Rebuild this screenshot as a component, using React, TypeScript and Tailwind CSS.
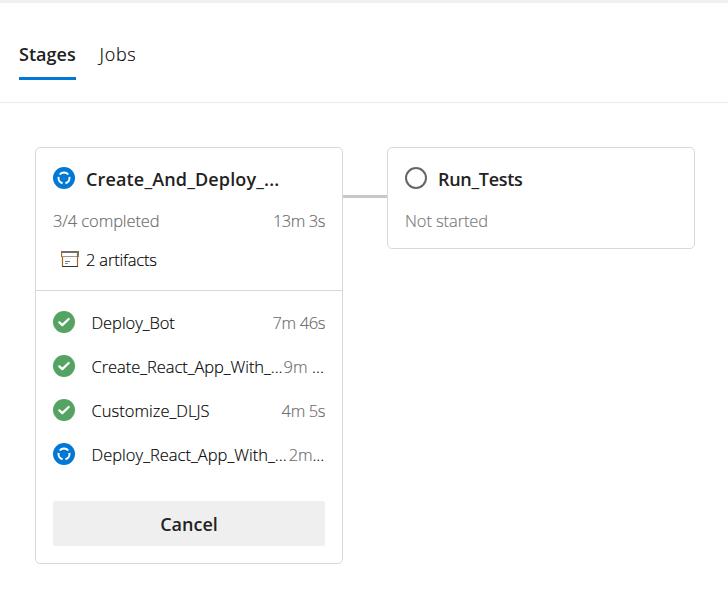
import type { ReactNode } from "react";

function RunningIcon() {
  return (
    <svg width="22" height="22" viewBox="0 0 22 22" className="block shrink-0">
      <circle cx="11" cy="11" r="11" fill="#0078d4" />
      <g fill="none" stroke="#fff" strokeWidth="2">
        <path d="M6.7 7.5A5.5 5.5 0 0 1 15.3 7.5" />
        <path d="M16.4 9.9A5.5 5.5 0 0 1 12.4 16.3" />
        <path d="M9.6 16.3A5.5 5.5 0 0 1 5.6 9.9" />
      </g>
    </svg>
  );
}

function SuccessIcon() {
  return (
    <svg width="22" height="22" viewBox="0 0 22 22" className="block shrink-0">
      <circle cx="11" cy="11" r="11" fill="#55a362" />
      <path d="M6.4 11.4 9.3 14.1 15.7 8" fill="none" stroke="#fff" strokeWidth="2.3" strokeLinecap="round" strokeLinejoin="round" />
    </svg>
  );
}

function PendingIcon() {
  return (
    <svg width="22" height="22" viewBox="0 0 22 22" className="block shrink-0">
      <circle cx="11" cy="11" r="10" fill="none" stroke="#666" strokeWidth="2" />
    </svg>
  );
}

function ArtifactIcon() {
  return (
    <svg width="18" height="16" viewBox="0 0 18 16" className="-mt-[3px] block shrink-0">
      <path d="M0 1H18" stroke="#111" strokeWidth="1.2" />
      <path d="M1 5.5H17" stroke="#999" />
      <path d="M.5 1V6M1.5 6V15M16.5 1V15" stroke="#a8661a" strokeWidth="1.2" />
      <path d="M17.5 2V6" stroke="#667fa8" />
      <path d="M1 15.5H17" stroke="#333" />
      <path d="M4 10.5H9" stroke="#777" />
      <path d="M4 12.5H7" stroke="#8592a5" />
    </svg>
  );
}

type JobProps = { icon: ReactNode; name: string; nameClass: string; time: ReactNode; timeClass: string };

function Job({ icon, name, nameClass, time, timeClass }: JobProps) {
  return (
    <div className="flex h-11 items-center whitespace-nowrap">
      {icon}
      <span className={`ml-[16.5px] mt-0.5 text-black ${nameClass}`}>{name}</span>
      <span className={`ml-auto mt-0.5 text-[#6a6a6a] ${timeClass}`}>{time}</span>
    </div>
  );
}

export default function App() {
  return (
    <div className="h-[592px] w-[728px] overflow-hidden bg-white font-['Open_Sans','Noto_Sans',sans-serif] text-[16.5px] font-light leading-6 text-[#222] [-webkit-text-stroke:0.15px]">
      <div className="h-[3px] bg-[#f0f0f0]" />
      <nav className="flex h-[100px] items-end gap-[22px] border-b border-[#eaeaea] pb-[22px] pl-[19px]">
        <button className="h-[39px] w-[57px] border-b-3 border-[#0078d4] pb-2.5 text-left text-[18px] font-semibold tracking-[0.03px] [-webkit-text-stroke:0]">Stages</button>
        <button className="h-[39px] pb-[13px] pl-[1.5px] text-left text-[18px] tracking-[0.7px] text-black">Jobs</button>
      </nav>
      <main className="flex items-start pl-[35px] pt-11">
        <section className="h-[417px] w-[308px] rounded-[5px] border border-[#d8d8d8]">
          <header className="h-[143px] border-b border-[#d8d8d8] px-[17px] pt-[19px]">
            <div className="flex h-[22px] items-center gap-[11px]">
              <RunningIcon />
              <h2 className="mt-px whitespace-nowrap text-[18px] font-semibold tracking-[0.15px] [-webkit-text-stroke:0]">Create_And_Deploy_...</h2>
            </div>
            <div className="mt-5 flex justify-between text-[#6a6a6a]">
              <span className="tracking-[-0.1px]">3/4 completed</span>
              <span className="tracking-[-0.45px]">13m 3s</span>
            </div>
            <div className="mt-[15px] flex items-center gap-[7px] pl-2 text-black">
              <ArtifactIcon />
              <span className="tracking-[-0.18px]">2 artifacts</span>
            </div>
          </header>
          <div className="px-[17px] pt-[9px]">
            <Job icon={<SuccessIcon />} name="Deploy_Bot" nameClass="tracking-[-0.05px]" time="7m 46s" timeClass="tracking-[-0.4px]" />
            <Job icon={<SuccessIcon />} name="Create_React_App_With_..." nameClass="tracking-[-0.05px]" time={<>9m <span className="text-black">...</span></>} timeClass="tracking-[0.05px] pr-px" />
            <Job icon={<SuccessIcon />} name="Customize_DLJS" nameClass="tracking-[0.02px]" time="4m 5s" timeClass="tracking-[-0.4px]" />
            <Job icon={<RunningIcon />} name="Deploy_React_App_With_..." nameClass="tracking-[0.02px]" time={<>2m<span className="text-black">...</span></>} timeClass="tracking-[-0.1px] pr-px" />
            <button className="mt-[25px] h-[45px] w-full rounded-[2px] bg-[#efefef] text-[18px] font-semibold [-webkit-text-stroke:0]">Cancel</button>
          </div>
        </section>
        <div className="mt-12 h-[3px] w-11 bg-[#c8c8c8]" />
        <section className="h-[102px] w-[308px] rounded-[5px] border border-[#d8d8d8] px-[17px] pt-[19px]">
          <div className="flex h-[22px] items-center gap-[11px]">
            <PendingIcon />
            <h2 className="mt-px whitespace-nowrap text-[18px] font-semibold tracking-[-0.3px] [-webkit-text-stroke:0]">Run_Tests</h2>
          </div>
          <div className="mt-5 tracking-[-0.1px] text-[#7a7a7a]">Not started</div>
        </section>
      </main>
    </div>
  );
}
